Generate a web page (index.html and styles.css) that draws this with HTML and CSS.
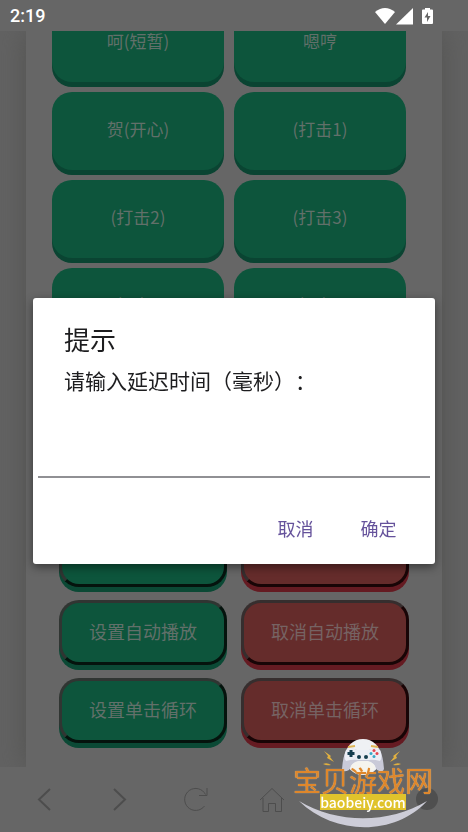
FILE: index.html
```html
<!DOCTYPE html>
<html lang="zh-CN">
<head>
<meta charset="utf-8">
<meta name="viewport" content="width=device-width, initial-scale=1">
<title>提示</title>
<link rel="stylesheet" href="styles.css">
</head>
<body>
<header class="status">
  <time>2:19</time>
  <svg class="status-icons" width="60" height="18" viewBox="0 0 60 18" aria-hidden="true">
    <path d="M0 5Q10-3 20 5L10 17Z"/>
    <path d="M21 17.500L38 1V17.500Z"/>
    <path fill-rule="evenodd" d="M50 1h5v1.500h2q1 0 1 1V16q0 1-1 1h-9q-1 0-1-1V3.500q0-1 1-1h2ZM53 5L49.500 10.500H52V15L55.500 9H53Z"/>
  </svg>
</header>
<main class="page">
  <div class="card">
    <div class="sounds">
      <button>呵(短暂)</button><button>嗯哼</button>
      <button>贺(开心)</button><button>(打击1)</button>
      <button>(打击2)</button><button>(打击3)</button>
      <button>(打击4)</button><button>(打击5)</button>
    </div>
    <div class="controls">
      <button>设置延迟</button><button class="stop">取消延迟</button>
      <button>设置自动播放</button><button class="stop">取消自动播放</button>
      <button>设置单击循环</button><button class="stop">取消单击循环</button>
    </div>
  </div>
</main>
<nav class="toolbar">
  <button aria-label="后退"><svg width="26" height="26" viewBox="0 0 26 26"><path d="M19 2L8 12.500L19 23"/></svg></button>
  <button aria-label="前进"><svg width="26" height="26" viewBox="0 0 26 26"><path d="M7 2L18 12.500L7 23"/></svg></button>
  <button aria-label="刷新"><svg class="thin" width="26" height="26" viewBox="0 0 26 26"><path d="M21.500 19A11 11 0 1 1 22.500 7.500M24 1V8.500H16"/></svg></button>
  <button aria-label="主页"><svg class="thin" width="26" height="26" viewBox="0 0 26 26"><path d="M1 13L13 1.500L25 13M4 11V24.500H9.500V16.500H16.500V24.500H22.500V11"/></svg></button>
  <button aria-label="菜单"></button>
  <span class="knob"></span>
</nav>
<div class="overlay">
  <form class="dialog" role="dialog" aria-labelledby="dialog-title">
    <h1 id="dialog-title">提示</h1>
    <label for="delay">请输入延迟时间（毫秒）：</label>
    <input id="delay" type="text" inputmode="numeric">
    <div class="actions">
      <button type="button">取消</button>
      <button type="button">确定</button>
    </div>
  </form>
</div>
<aside class="brand">
  <svg class="pad" viewBox="0 0 80 36" aria-hidden="true">
    <circle cx="40" cy="18" r="18" fill="#eff1f4"/>
    <path d="M23 12Q29 8 34 11H46Q51 8 57 11Q60 17 61 30Q60 34 54 31Q51 23 45 22H35Q29 23 26 31Q20 34 19 30Q20 17 23 12Z" fill="#c9cad8"/>
    <path d="M23 11Q29 8 34 11H46Q51 8 57 11Q60 18 57 22Q50 20 45 21H35Q30 20 23 22Q20 18 23 11Z" fill="#eceef5"/>
    <ellipse cx="40" cy="28" rx="12" ry="6" fill="#f5f4ee"/>
    <path d="M25 8l7-1M48 7l7 1" stroke="#dfb555" stroke-width="2"/>
    <path d="M28 11v7M24.500 14.500h7" stroke="#173e50" stroke-width="3"/>
    <circle cx="36" cy="18" r="2" fill="#173e50"/><circle cx="43" cy="18" r="2" fill="#173e50"/>
    <circle cx="51" cy="11.500" r="1.500" fill="#e64650"/><circle cx="51" cy="17.500" r="1.500" fill="#39a9c7"/>
    <circle cx="48" cy="14.500" r="1.500" fill="#39a9c7"/><circle cx="54" cy="14.500" r="1.500" fill="#e64650"/>
    <path d="M1 12l7 5-1 1 4 5-7-4 1-2ZM77 12l-7 5 1 1-4 5 7-4-1-2ZM0 25q4-2 8 1-4 1-8-1ZM78 25q-4-2-8 1 4 1 8-1Z" fill="#e0b040"/>
  </svg>
  <strong>宝贝游戏网</strong>
  <span>baobeiy.com</span>
  <svg class="smile" viewBox="0 0 128 27" aria-hidden="true"><path d="M0 0C38 23 90 23 128 0C96 35 36 35 0 0Z"/></svg>
</aside>
</body>
</html>
```

FILE: styles.css
```css
* {
  box-sizing: border-box;
}

body {
  display: flex;
  flex-direction: column;
  height: 100vh;
  margin: 0;
  overflow: hidden;
  background: #666;
  font-family: "Noto Sans CJK SC", sans-serif;
  text-spacing-trim: space-all;
}

button {
  margin: 0;
  padding: 0;
  font-family: inherit;
}

.status {
  display: flex;
  flex: none;
  align-items: center;
  justify-content: space-between;
  height: 31px;
  padding: 0 33px 0 10px;
  color: #fff;
  font: 500 18px Roboto, sans-serif;
}

.status-icons {
  fill: #fff;
}

.page {
  flex: 1;
  min-height: 0;
  padding: 0 26px;
  overflow: hidden;
  background: #626262;
}

.card {
  display: flex;
  flex-direction: column;
  justify-content: space-between;
  height: 100%;
  padding: 0 33px 24px 26px;
  background: #666;
  box-shadow: 0 0 26px #535351;
}

.sounds {
  display: grid;
  grid-template-columns: 1fr 1fr;
  gap: 10px;
  margin: -27px 3px 0 0;
}

.sounds button {
  height: 78px;
  padding-bottom: 6px;
  border: 0;
  border-radius: 20px;
  background: #0d553c;
  box-shadow: 0 5px #0a4432;
  color: #62706a;
  font-size: 17px;
}

.controls {
  display: grid;
  grid-template-columns: 1fr 1fr;
  gap: 13px 14px;
  padding-left: 7px;
}

.controls button {
  height: 65px;
  padding-bottom: 3px;
  border: 3px solid;
  border-color: #303532 #05130d #05130d #303532;
  border-radius: 20px;
  background: #0d553c;
  box-shadow: 0 5px #0b4935;
  color: #62706a;
  font-size: 18px;
}

.controls .stop {
  border-color: #362e2e #180506 #180506 #362e2e;
  background: #652c2b;
  box-shadow: 0 5px #651b22;
  color: #766363;
}

.toolbar {
  position: relative;
  display: grid;
  flex: none;
  grid-template-columns: repeat(5, 1fr);
  height: 65px;
  padding: 0 82px 0 6px;
  background: #666;
}

.toolbar button {
  display: grid;
  place-items: center;
  border: 0;
  background: none;
}

.toolbar svg {
  fill: none;
  stroke: #4d4d4d;
  stroke-width: 2;
}

.toolbar .thin {
  stroke-width: 1;
}

.knob {
  position: absolute;
  right: 30px;
  bottom: 22px;
  width: 22px;
  height: 22px;
  border-radius: 50%;
  background: #4f4f4f;
}

.overlay {
  position: fixed;
  inset: 0;
  display: flex;
  align-items: center;
  padding: 30px 33px 0;
}

.dialog {
  display: flex;
  flex: 1;
  flex-direction: column;
  padding: 23px 5px 16px;
  border-radius: 3px;
  background: #fff;
  box-shadow: 0 3px 10px rgba(0, 0, 0, 0.45);
  color: #1d1d1f;
}

.dialog h1 {
  margin: 0 26px;
  font-size: 26px;
  font-weight: 400;
  line-height: 36px;
}

.dialog label {
  margin: 7px 26px 0;
  font-size: 21px;
  line-height: 32px;
}

.dialog input {
  width: 100%;
  height: 82px;
  padding: 0 26px;
  border: 0;
  border-bottom: 2px solid #909094;
  background: none;
  font: inherit;
  outline: 0;
}

.actions {
  display: flex;
  gap: 12px;
  justify-content: flex-end;
  margin-top: 30px;
  padding-right: 16px;
}

.actions button {
  width: 71px;
  height: 40px;
  border: 0;
  background: none;
  color: #65529b;
  font-size: 18px;
}

.brand {
  position: fixed;
  right: 32px;
  bottom: 4px;
  display: grid;
  justify-items: center;
  width: 146px;
}

.pad {
  width: 80px;
  height: 36px;
  margin-bottom: -9px;
}

.brand strong {
  z-index: 1;
  color: #df872b;
  font-size: 28px;
  font-weight: 400;
  line-height: 28px;
  text-shadow: 0 0 1px #f3c98c;
}

.brand span {
  z-index: 1;
  width: 86px;
  background: #e0c32c;
  color: #fff;
  font-size: 14px;
  font-weight: 500;
  line-height: 16px;
  text-align: center;
}

.smile {
  width: 128px;
  height: 27px;
  margin-top: -9px;
  fill: #cdcdd8;
}
```
